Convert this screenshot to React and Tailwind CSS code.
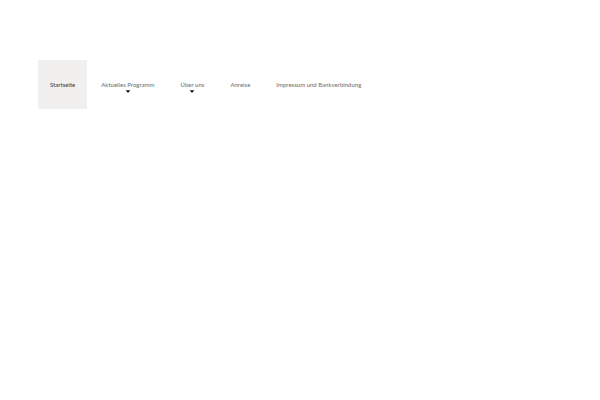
const items = [
  { label: "Startseite", active: true },
  { label: "Aktuelles Programm", submenu: true },
  { label: "Über uns", submenu: true },
  { label: "Anreise" },
  { label: "Impressum und Bankverbindung" },
];

function Caret() {
  return (
    <svg
      className="absolute left-1/2 top-full -mt-px h-[3px] w-[5px] -translate-x-1/2"
      viewBox="0 0 5 3"
      aria-hidden="true"
    >
      <path d="M0.2 0.2H4.8L2.5 3Z" fill="#111111" />
    </svg>
  );
}

export default function App() {
  return (
    <header className="min-h-screen bg-white px-[38px] pt-[60px] font-['Lato',sans-serif]">
      <nav aria-label="Hauptmenü">
        <ul className="flex gap-[2px]">
          {items.map((item) => (
            <li key={item.label}>
              <a
                href="#"
                aria-current={item.active ? "page" : undefined}
                className={`flex h-[49px] items-center whitespace-nowrap px-[12px] text-[6px] leading-[12px] font-medium ${
                  item.active ? "bg-[#f1f0ee] text-[#444444]" : "text-[#777777]"
                }`}
              >
                <span className="relative">
                  {item.label}
                  {item.submenu && <Caret />}
                </span>
              </a>
            </li>
          ))}
        </ul>
      </nav>
    </header>
  );
}
